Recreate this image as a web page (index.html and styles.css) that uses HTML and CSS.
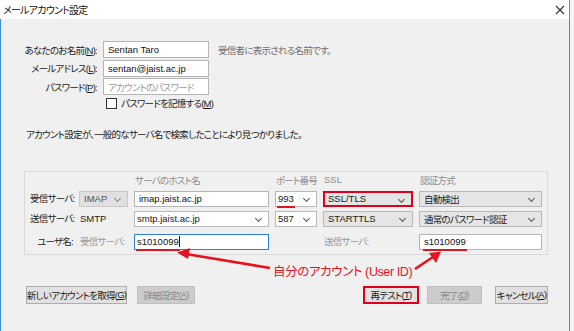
FILE: index.html
```html
<!DOCTYPE html>
<html lang="ja">
<head>
<meta charset="utf-8">
<link rel="stylesheet" href="styles.css">
</head>
<body>
<div class="dialog">
  <div class="titlebar">
    <span class="title">メールアカウント設定</span>
    <svg class="close" width="10" height="10" viewBox="0 0 10 10"><path d="M1 1L9 9M9 1L1 9" stroke="#333" stroke-width="1.1" fill="none"/></svg>
  </div>
  <div class="content">
    <div class="ident">
      <label class="lbl">あなたのお名前(<u>N</u>):</label>
      <div class="field en">Sentan Taro</div>
      <span class="hint">受信者に表示される名前です。</span>
      <label class="lbl">メールアドレス(<u>L</u>):</label>
      <div class="field en">sentan@jaist.ac.jp</div>
      <span></span>
      <label class="lbl">パスワード(<u>P</u>):</label>
      <div class="field placeholder">アカウントのパスワード</div>
      <span></span>
      <span></span>
      <div class="check"><span class="box"></span>パスワードを記憶する(<u>M</u>)</div>
    </div>

    <p class="message">アカウント設定が、一般的なサーバ名で検索したことにより見つかりました。</p>

    <div class="group">
      <span></span><span></span>
      <span class="head">サーバのホスト名</span>
      <span class="head">ポート番号</span>
      <span class="head en">SSL</span>
      <span class="head">認証方式</span>

      <span class="rlbl">受信サーバ:</span>
      <div class="select disabled en">IMAP</div>
      <div class="field en">imap.jaist.ac.jp</div>
      <div class="select white en"><span class="mark">993</span></div>
      <div class="select redbox en">SSL/TLS</div>
      <div class="select">自動検出</div>

      <span class="rlbl">送信サーバ:</span>
      <span class="plain en">SMTP</span>
      <div class="select white en">smtp.jaist.ac.jp</div>
      <div class="select white en">587</div>
      <div class="select en">STARTTLS</div>
      <div class="select">通常のパスワード認証</div>

      <span class="rlbl">ユーザ名:</span>
      <span class="sub">受信サーバ:</span>
      <div class="field focus en"><span class="mark">s1010099</span><span class="caret"></span></div>
      <span></span>
      <span class="sub">送信サーバ:</span>
      <div class="field en"><span class="mark">s1010099</span></div>
    </div>

    <div class="buttons">
      <div class="btn-group">
        <div class="btn b-new">新しいアカウントを取得(<u>G</u>)</div>
        <div class="btn off b-adv">詳細設定(<u>A</u>)</div>
      </div>
      <div class="btn-group">
        <div class="btn redbtn">再テスト(<u>T</u>)</div>
        <div class="btn off b-done">完了(<u>D</u>)</div>
        <div class="btn b-cancel">キャンセル(<u>A</u>)</div>
      </div>
    </div>

    <span class="note">自分のアカウント (User ID)</span>
    <svg class="arrows" width="568" height="312" viewBox="0 0 568 312">
      <g transform="translate(-1,-19)" fill="#e4141f" stroke="#e4141f">
        <line x1="270" y1="268" x2="186" y2="254" stroke-width="2.6"/>
        <polygon points="177,252.5 190,248 188,259" stroke="none"/>
        <line x1="415" y1="269" x2="433" y2="257" stroke-width="2.6"/>
        <polygon points="441,251.5 436,263 429,253" stroke="none"/>
      </g>
    </svg>
  </div>
</div>
</body>
</html>
```

FILE: styles.css
```css
* { box-sizing: border-box; }
html, body { margin: 0; padding: 0; }
body {
  width: 574px;
  height: 331px;
  background: #f4f4f4;
  font-family: "Liberation Sans", "Noto Sans CJK JP", sans-serif;
  font-size: 9.5px;
  font-feature-settings: "palt";
  letter-spacing: -0.75px;
  color: #1a1a1a;
  overflow: hidden;
}
.en { letter-spacing: 0; }
u { text-decoration: underline; text-underline-offset: 1px; }

.dialog {
  width: 570px;
  height: 331px;
  border-right: 1px solid #3d8fe0;
  background: #f0f0f0;
}
.titlebar {
  height: 19px;
  background: #fff;
  display: flex;
  align-items: center;
  justify-content: space-between;
  padding: 0 4px 0 3px;
}
.title { font-size: 10px; color: #111; }

.content {
  position: relative;
  height: 312px;
  border-left: 1px solid #3d8fe0;
  padding-top: 22px;
}

.ident {
  display: grid;
  grid-template-columns: 96px 106px auto;
  grid-template-rows: 17px 17px 17px 13px;
  column-gap: 6px;
  row-gap: 1.5px;
  align-items: center;
}
.lbl { text-align: right; color: #222; white-space: nowrap; }
.hint { color: #6e6e6e; margin-left: 3px; white-space: nowrap; }

.field {
  position: relative;
  height: 17px;
  background: #fff;
  border: 1px solid #b5b5b5;
  padding-left: 4px;
  display: flex;
  align-items: center;
  white-space: nowrap;
  color: #111;
}
.field.placeholder { color: #9a9a9a; }
.field.focus { border-color: #2d7fd8; padding-left: 2px; }

.check {
  display: flex;
  align-items: center;
  margin-left: 3px;
  white-space: nowrap;
}
.box {
  flex: 0 0 11px;
  width: 11px;
  height: 11px;
  border: 1px solid #333;
  background: #fff;
  margin-right: 4px;
}

.message {
  margin: 18px 0 0 25px;
  height: 13px;
  line-height: 13px;
  color: #1a1a1a;
  white-space: nowrap;
}

.group {
  margin: 30px 0 0 23px;
  width: 524px;
  border: 1px solid #d9d9d9;
  padding: 1px 5px 4px 5px;
  display: grid;
  grid-template-columns: 43px 49px 135px 42px 90px 123px;
  grid-template-rows: 14px 16px 16px 19px;
  column-gap: 6px;
  row-gap: 4px;
  align-items: end;
}
.group .field { height: 16px; }
.head { color: #8c8c8c; padding-left: 1px; white-space: nowrap; align-self: center; }
.rlbl { text-align: right; white-space: nowrap; line-height: 16px; }
.plain { padding-left: 1px; line-height: 16px; }
.sub { color: #999; padding-left: 1px; white-space: nowrap; line-height: 16px; }

.select {
  position: relative;
  height: 16px;
  background: #e5e5e5;
  border: 1px solid #b8b8b8;
  padding-left: 4px;
  display: flex;
  align-items: center;
  white-space: nowrap;
}
.select::after {
  content: "";
  position: absolute;
  right: 7px;
  top: 4px;
  width: 4px;
  height: 4px;
  border-right: 1px solid #555;
  border-bottom: 1px solid #555;
  transform: rotate(45deg);
}
.select.white { background: #fff; padding-left: 2px; }
.select.disabled { background: #e0e0e0; border-color: #c8c8c8; color: #555; }
.select.disabled::after { border-color: #888; }
.select.redbox { border: 2px solid #e0001b; padding-left: 3px; }

.mark { position: relative; }
.mark::after {
  content: "";
  position: absolute;
  left: -1px;
  right: -1px;
  bottom: -4px;
  height: 2px;
  background: #e0141e;
}
.caret {
  display: inline-block;
  width: 1px;
  height: 11px;
  background: #111;
}

.buttons {
  margin-top: 31px;
  display: flex;
  justify-content: space-between;
  padding: 0 21px 0 25px;
}
.btn-group { display: flex; }
.btn {
  height: 18px;
  background: #e1e1e1;
  border: 1px solid #adadad;
  display: flex;
  align-items: center;
  justify-content: center;
  white-space: nowrap;
}
.btn.off { background: #cccccc; border-color: #bfbfbf; color: #8a8a8a; }
.b-new { width: 101px; margin-right: 10px; }
.b-adv { width: 58px; }
.btn.redbtn { width: 56px; border: 2px solid #e0001b; margin-right: 8px; }
.b-done { width: 55px; margin-right: 13px; }
.b-cancel { width: 53px; }

.note {
  position: absolute;
  left: 272px;
  top: 242px;
  font-size: 12.5px;
  color: #e4141f;
  white-space: nowrap;
  letter-spacing: -0.4px;
}
.arrows { position: absolute; left: 0; top: 0; pointer-events: none; }
```
